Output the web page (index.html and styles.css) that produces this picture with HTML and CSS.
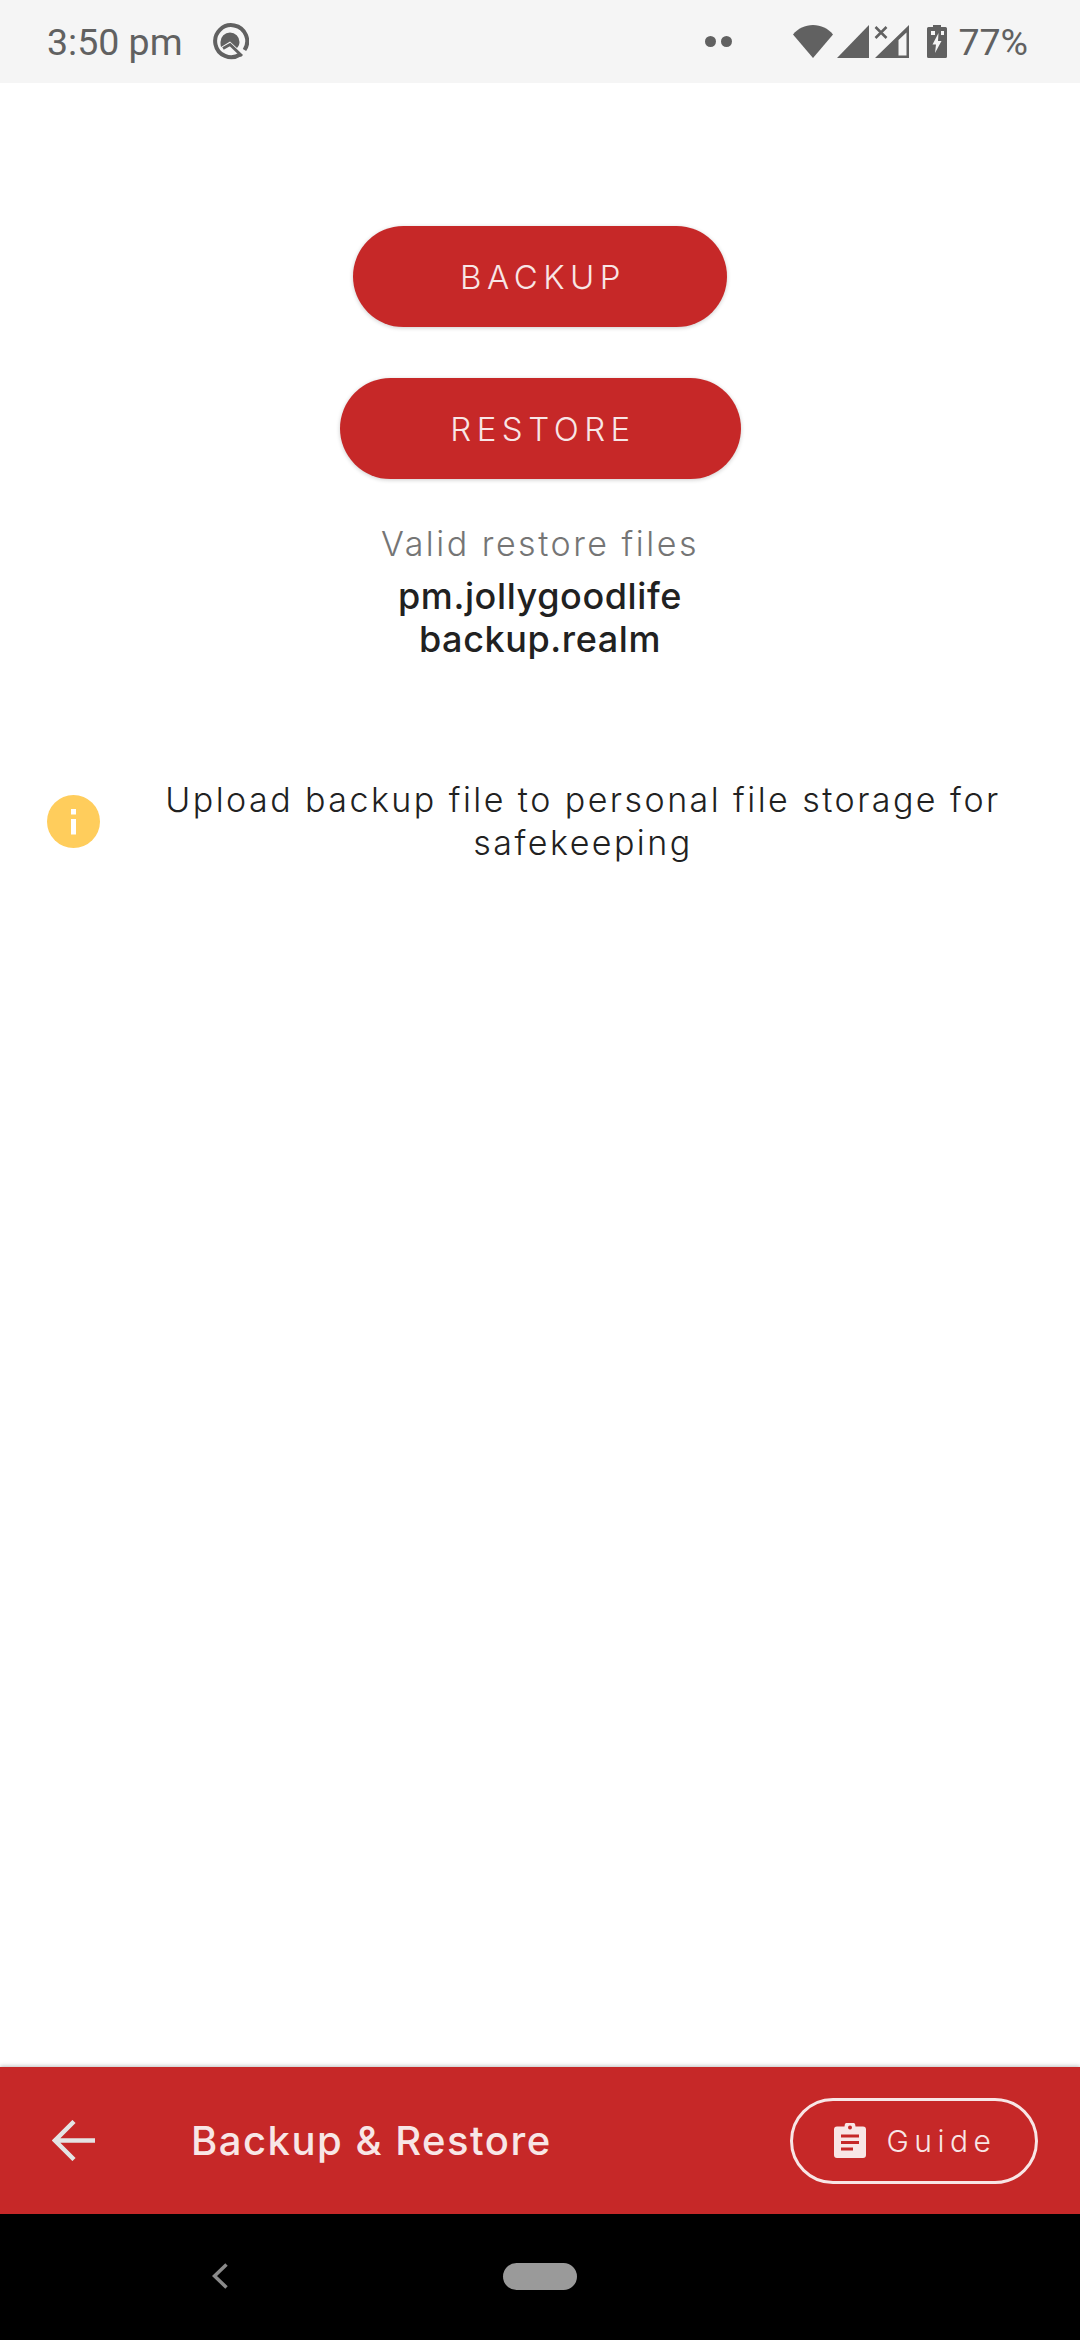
FILE: index.html
```html
<!DOCTYPE html>
<html lang="en">
<head>
	<meta charset="UTF-8">
	<title>Backup &amp; Restore</title>
	<link rel="stylesheet" href="styles.css">
</head>
<body>
	<div class="app">
		<div class="status">
			<span class="time">3:50 pm</span>
			<svg class="q-icon" viewBox="0 0 38 38">
				<path d="M29 31.500A16 16 0 1 1 33.500 27" fill="none" stroke="#616161" stroke-width="4"/>
				<path d="M19 9.500A9.500 9.500 0 0 1 28.500 19C28.500 22 27 24 26 25L19 18.500L10 24C9.500 22 9.500 20.500 9.500 19A9.500 9.500 0 0 1 19 9.500Z" fill="#616161"/>
				<path d="M12 25.500L19 21.500L31 33" fill="none" stroke="#616161" stroke-width="3"/>
			</svg>
			<span class="dots"><i></i><i></i></span>
			<svg class="wifi" viewBox="0 0 40 33"><path d="M0 9.500C5 3.500 12 0 20 0s15 3.500 20 9.500L20 33Z" fill="#616161"/></svg>
			<svg class="signal" viewBox="0 0 32 33"><path d="M0 33L32 0V33Z" fill="#616161"/></svg>
			<svg class="signal-x" viewBox="0 0 36 33">
				<path d="M1.500 2L12.500 13M12.500 2L1.500 13" stroke="#616161" stroke-width="2.500"/>
				<path d="M1 33L35 0V33ZM24.500 15V30.500H32.500V7.500Z" fill="#616161" fill-rule="evenodd"/>
			</svg>
			<svg class="battery" viewBox="0 0 20 33">
				<path d="M6 0H14V2H18.500Q20 2 20 3.500V31.500Q20 33 18.500 33H1.500Q0 33 0 31.500V3.500Q0 2 1.500 2H6Z" fill="#616161"/>
				<path d="M4 6H8V10H4ZM14 6H17V10H14Z" fill="#f5f5f5"/>
				<path d="M11.500 8L5.500 19.500H9L8 28L14.500 16H11Z" fill="#f5f5f5"/>
			</svg>
			<span class="percent">77%</span>
		</div>

		<div class="content">
			<a class="btn btn-backup">BACKUP</a>
			<a class="btn btn-restore">RESTORE</a>
			<p class="valid-label">Valid restore files</p>
			<p class="valid-name">pm.jollygoodlife<br>backup.realm</p>
			<div class="info">
				<svg class="info-icon" viewBox="0 0 53 53">
					<circle cx="26.500" cy="26.500" r="26.500" fill="#ffcd5c"/>
					<path d="M24 14H29V19.500H24ZM24 24H29V39.500H24Z" fill="#fff"/>
				</svg>
				<p class="info-text">Upload backup file to personal file storage for safekeeping</p>
			</div>
		</div>

		<div class="bottom-bar">
			<svg class="back-arrow" viewBox="0 0 43 41">
				<path d="M43 20.500H4M22 1.500L3 20.500L22 39.500" fill="none" stroke="#e4e4e4" stroke-width="4.500"/>
			</svg>
			<span class="bar-title">Backup &amp; Restore</span>
			<a class="guide">
				<svg class="guide-icon" viewBox="0 0 32 35">
					<path d="M3 3.500H10.500A5.500 5.500 0 0 1 21.500 3.500H29Q32 3.500 32 6.500V32Q32 35 29 35H3Q0 35 0 32V6.500Q0 3.500 3 3.500Z" fill="#f8e6e6"/>
					<circle cx="16" cy="4.500" r="2" fill="#c62828"/>
					<path d="M7 11.500H25V14.500H7ZM7 18H25V21H7ZM7 24.500H19V27.500H7Z" fill="#c62828"/>
				</svg>
				<span>Guide</span>
			</a>
		</div>

		<div class="nav-bar">
			<svg class="nav-back" viewBox="0 0 16 26">
				<path d="M14.500 1.500L2.500 13L14.500 24.500" fill="none" stroke="#8a8a8a" stroke-width="3.500"/>
			</svg>
			<span class="nav-pill"></span>
		</div>
	</div>
</body>
</html>
```

FILE: styles.css
```css
*{
	margin:0;
	padding:0;
	box-sizing:border-box;
}
body{
	background:#fff;
	font-family:Inter,"Liberation Sans",sans-serif;
}
.app{
	width:1080px;
	height:2340px;
	display:flex;
	flex-direction:column;
	overflow:hidden;
}

/* status bar */
.status{
	height:83px;
	flex:none;
	background:#f5f5f5;
	color:#616161;
	display:flex;
	align-items:center;
	padding:0 52px 0 47px;
	font-family:Roboto,sans-serif;
	font-size:37.500px;
}
.q-icon{
	width:38px;
	height:38px;
	margin-left:28px;
}
.dots{
	display:flex;
	gap:5px;
	margin-left:auto;
}
.dots i{
	width:11px;
	height:11px;
	border-radius:50%;
	background:#616161;
}
.wifi{
	width:40px;
	height:33px;
	margin-left:61px;
}
.signal{
	width:32px;
	height:33px;
	margin-left:4px;
}
.signal-x{
	width:36px;
	height:33px;
	margin-left:5px;
}
.battery{
	width:20px;
	height:33px;
	margin-left:17px;
}
.percent{
	margin-left:11px;
}

/* main part */
.content{
	flex:1;
	display:flex;
	flex-direction:column;
	align-items:center;
	padding-top:143px;
}
.btn{
	height:101px;
	border-radius:51px;
	background:#c62828;
	color:#f8e6e6;
	font-size:33px;
	font-weight:350;
	letter-spacing:5.500px;
	padding-left:6px;
	display:flex;
	align-items:center;
	justify-content:center;
	box-shadow:0 1px 4px rgba(0,0,0,.2);
}
.btn-backup{
	width:374px;
}
.btn-restore{
	width:401px;
	margin-top:51px;
}
.valid-label{
	margin-top:43px;
	font-size:34px;
	font-weight:300;
	letter-spacing:2.500px;
	line-height:43px;
	color:#757575;
}
.valid-name{
	margin-top:10px;
	font-size:36px;
	font-weight:500;
	letter-spacing:.600px;
	line-height:43px;
	color:#212121;
	text-align:center;
}
.info{
	width:100%;
	margin-top:117px;
	padding:0 14px 0 47px;
	display:flex;
	align-items:center;
}
.info-icon{
	width:53px;
	height:53px;
	flex:none;
}
.info-text{
	flex:1;
	padding:0 40px;
	font-size:34px;
	font-weight:350;
	letter-spacing:2.450px;
	line-height:43px;
	color:#212121;
	text-align:center;
}

/* bottom bars */
.bottom-bar{
	height:147px;
	flex:none;
	background:#c62828;
	color:#f8e6e6;
	display:flex;
	align-items:center;
	padding:0 42px 0 52px;
	box-shadow:0 -1px 4px rgba(0,0,0,.25);
}
.back-arrow{
	width:43px;
	height:41px;
}
.bar-title{
	margin-left:96px;
	font-size:40px;
	font-weight:500;
	letter-spacing:1.500px;
}
.guide{
	margin-left:auto;
	width:248px;
	height:86px;
	border:3px solid #f8e6e6;
	border-radius:43px;
	display:flex;
	align-items:center;
	justify-content:center;
	gap:21px;
	padding-left:2px;
	font-size:30px;
	font-weight:350;
	letter-spacing:5.500px;
}
.guide-icon{
	width:32px;
	height:35px;
}
.nav-bar{
	height:126px;
	flex:none;
	background:#000;
	display:flex;
	align-items:flex-start;
	padding:49px 0 0 212px;
}
.nav-back{
	width:16px;
	height:26px;
}
.nav-pill{
	width:74px;
	height:27px;
	margin-left:275px;
	border-radius:14px;
	background:#9a9a9a;
}
```
